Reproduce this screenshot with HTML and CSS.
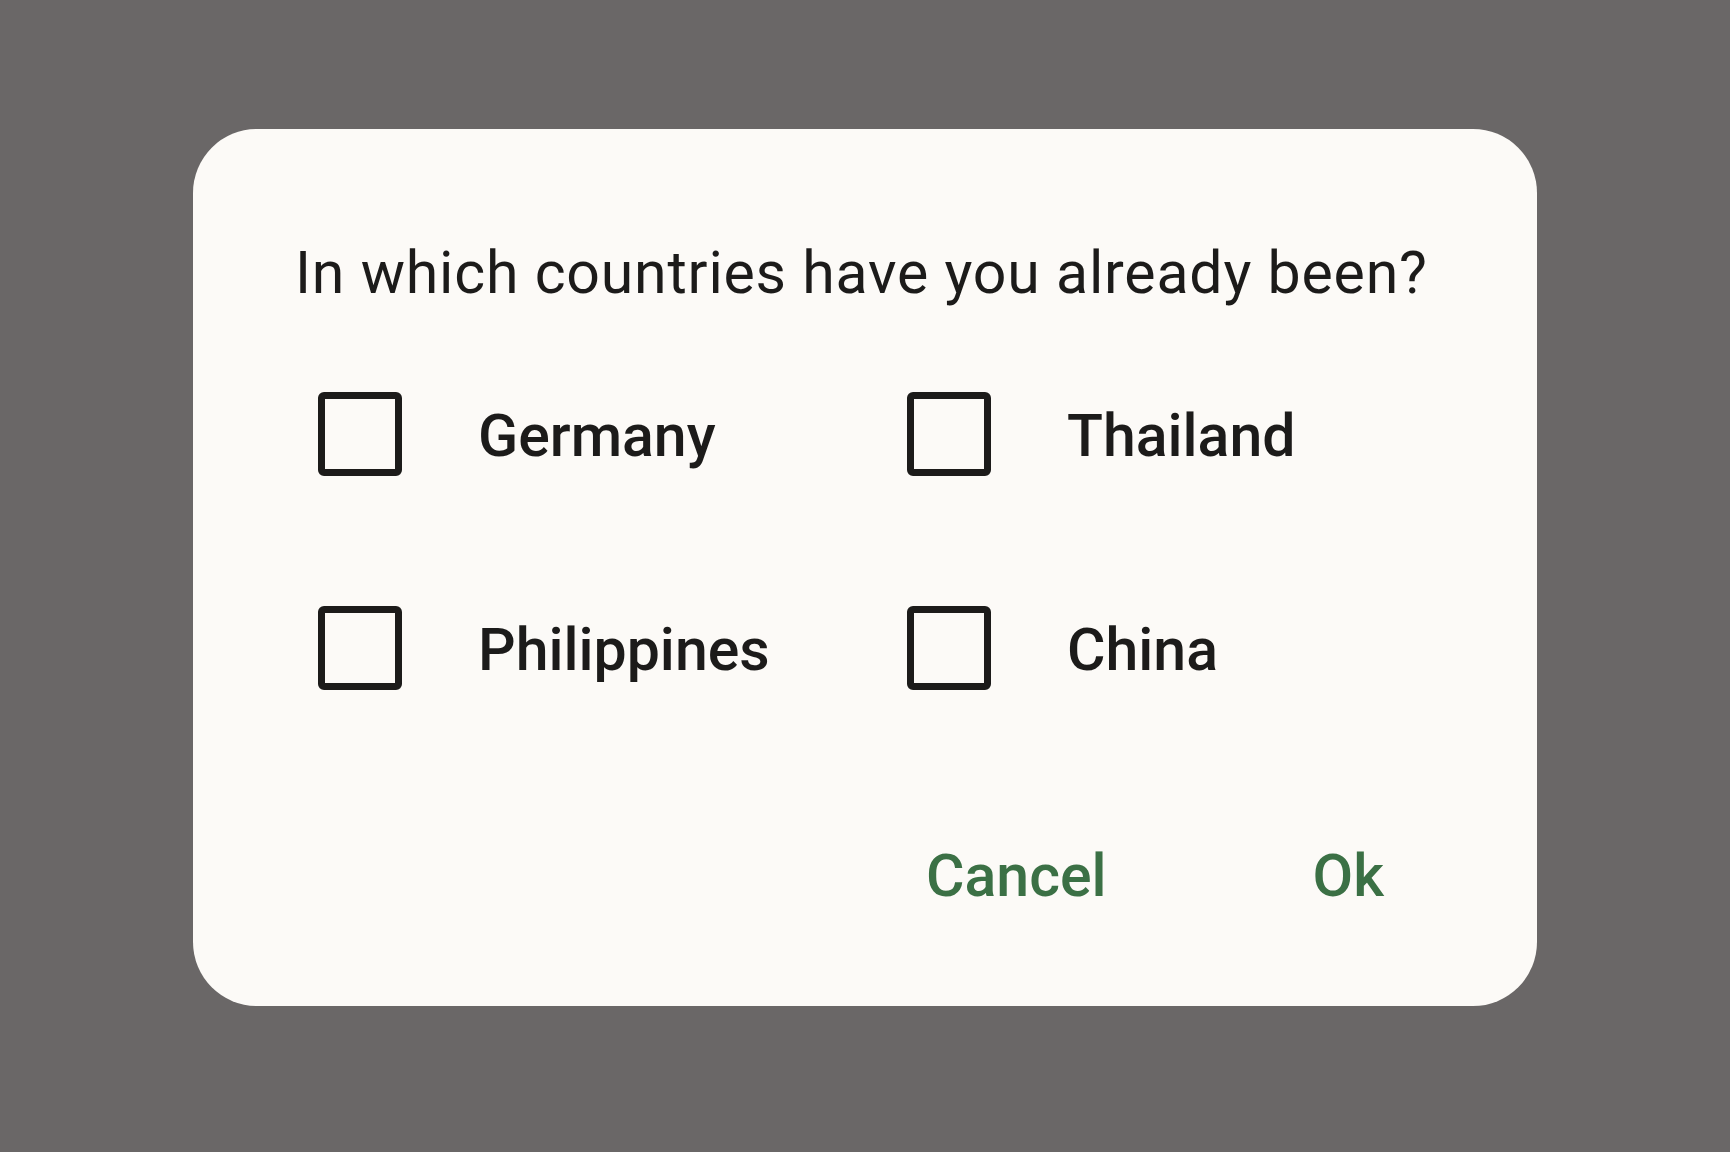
FILE: index.html
```html
<!DOCTYPE html>
<html>
<head>
<meta charset="utf-8">
<link rel="stylesheet" href="styles.css">
</head>
<body>
<div class="screen">
  <div class="dialog">
    <div class="title">In which countries have you already been?</div>
    <div class="options">
      <label class="option"><span class="box"></span><span class="label">Germany</span></label>
      <label class="option"><span class="box"></span><span class="label">Thailand</span></label>
      <label class="option"><span class="box"></span><span class="label">Philippines</span></label>
      <label class="option"><span class="box"></span><span class="label">China</span></label>
    </div>
    <div class="actions">
      <span class="btn">Cancel</span>
      <span class="btn">Ok</span>
    </div>
  </div>
</div>
</body>
</html>
```
FILE: styles.css
```css
html, body {
  margin: 0;
  padding: 0;
}
body {
  background: #6a6767;
  font-family: Roboto, "Noto Sans", sans-serif;
}
.screen {
  width: 1730px;
  height: 1152px;
  padding-top: 129px;
  padding-left: 193px;
  box-sizing: border-box;
}
.dialog {
  width: 1344px;
  height: 877px;
  box-sizing: border-box;
  background: #fcfaf7;
  border-radius: 64px;
  padding: 109px 153px 0 102px;
}
.title {
  font-size: 59px;
  line-height: 70px;
  color: #1c1b1a;
  font-weight: 400;
  letter-spacing: 0.8px;
  white-space: nowrap;
}
.options {
  display: grid;
  grid-template-columns: 589px 589px;
  row-gap: 130px;
  margin-top: 84px;
  padding-left: 23px;
}
.option {
  display: flex;
  align-items: center;
  height: 84px;
}
.box {
  width: 84px;
  height: 84px;
  box-sizing: border-box;
  border: 7px solid #1c1b1a;
  border-radius: 6px;
  margin-right: 76px;
  flex: none;
}
.label {
  font-size: 59px;
  font-weight: 500;
  color: #1c1b1a;
  line-height: 70px;
  padding-top: 4px;
}
.actions {
  display: flex;
  justify-content: flex-end;
  gap: 206px;
  margin-top: 151px;
}
.btn {
  font-size: 59px;
  line-height: 70px;
  font-weight: 500;
  color: #3b7045;
}
```
